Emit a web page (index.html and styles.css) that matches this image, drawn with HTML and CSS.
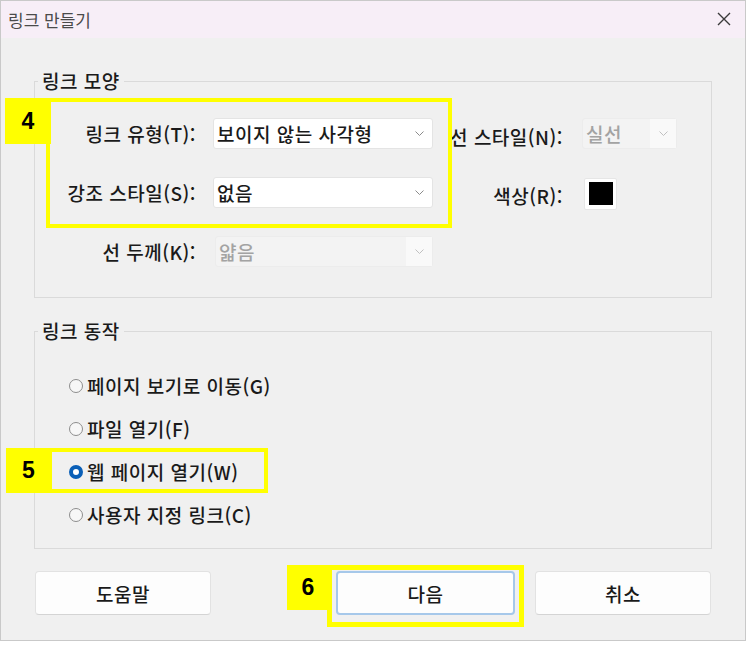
FILE: index.html
```html
<!DOCTYPE html>
<html lang="ko">
<head>
<meta charset="utf-8">
<title>링크 만들기</title>
<link rel="stylesheet" href="styles.css">
</head>
<body>
<div class="window">
  <div class="titlebar">
    <span class="title">링크 만들기</span>
    <svg class="close" width="14" height="14" viewBox="0 0 14 14"><path d="M1 1L13 13M13 1L1 13" stroke="#3a3a3a" stroke-width="1.4" fill="none"/></svg>
  </div>
  <div class="content">
    <fieldset class="group g1">
      <legend>링크 모양</legend>
      <div class="grid">
        <span class="lbl">링크 유형(T):</span>
        <div class="select"><span>보이지 않는 사각형</span><svg class="chev" width="9" height="5" viewBox="0 0 9 5"><path d="M0.5 0.5L4.5 4.5L8.5 0.5" stroke="#8a8a8a" fill="none"/></svg></div>
        <span class="lbl lbl-r">선 스타일(N):</span>
        <div class="select disabled narrow"><span>실선</span><span class="chev-box"><svg class="chev" width="9" height="5" viewBox="0 0 9 5"><path d="M0.5 0.5L4.5 4.5L8.5 0.5" stroke="#c0c0c0" fill="none"/></svg></span></div>

        <span class="lbl">강조 스타일(S):</span>
        <div class="select"><span>없음</span><svg class="chev" width="9" height="5" viewBox="0 0 9 5"><path d="M0.5 0.5L4.5 4.5L8.5 0.5" stroke="#8a8a8a" fill="none"/></svg></div>
        <span class="lbl lbl-r">색상(R):</span>
        <div class="swatch"><span class="swatch-fill"></span></div>

        <span class="lbl">선 두께(K):</span>
        <div class="select disabled thick"><span>얇음</span><span class="chev-box"><svg class="chev" width="9" height="5" viewBox="0 0 9 5"><path d="M0.5 0.5L4.5 4.5L8.5 0.5" stroke="#c0c0c0" fill="none"/></svg></span></div>
      </div>
    </fieldset>

    <fieldset class="group g2">
      <legend>링크 동작</legend>
      <div class="radios">
        <div class="radio"><span class="dot"></span><span>페이지 보기로 이동(G)</span></div>
        <div class="radio"><span class="dot"></span><span>파일 열기(F)</span></div>
        <div class="radio"><span class="dot on"></span><span>웹 페이지 열기(W)</span></div>
        <div class="radio"><span class="dot"></span><span>사용자 지정 링크(C)</span></div>
      </div>
    </fieldset>

    <div class="buttons">
      <button class="btn">도움말</button>
      <button class="btn primary">다음</button>
      <button class="btn">취소</button>
    </div>
  </div>

  <div class="mark-box box4"></div>
  <div class="badge badge4">4</div>
  <div class="mark-box box5"></div>
  <div class="badge badge5">5</div>
  <div class="mark-box box6"></div>
  <div class="badge badge6">6</div>
</div>
</body>
</html>
```

FILE: styles.css
```css
* { box-sizing: border-box; }
html, body { margin: 0; padding: 0; background: #ffffff; }
body {
  font-family: "Noto Sans CJK KR", "Noto Sans", sans-serif;
  font-size: 19px;
  font-weight: 500;
  letter-spacing: 0.5px;
  color: #1a1a1a;
}
.window {
  position: relative;
  width: 746px;
  height: 641px;
  border: 1px solid #c9c9c9;
  background: #f0f0f0;
}
.titlebar {
  height: 37px;
  background: #f7eef7;
  display: flex;
  align-items: center;
  justify-content: space-between;
  padding: 0 14px 0 7px;
}
.title { font-size: 17px; font-weight: 400; letter-spacing: 0; color: #4a4a4a; }
.close { display: block; margin-top: -2px; }
.content {
  padding: 31px 33px 0 33px;
}
.group {
  margin: 0;
  padding: 0;
  border: 1px solid #dadada;
  min-width: 0;
}
.group legend {
  margin-left: 3px;
  padding: 0 4px;
  line-height: 24px;
}
.grid {
  display: grid;
  grid-template-columns: 161px 220px 113px 114px;
  column-gap: 17px;
  grid-template-rows: 31px 31px 31px;
  row-gap: 28px;
  padding: 25px 0 30px 0;
  align-items: center;
}
.lbl { text-align: right; white-space: nowrap; }
.lbl-r { position: relative; top: 3px; }
.select {
  height: 31px;
  background: #ffffff;
  border: 1px solid #e4e4e4;
  border-radius: 3px;
  display: flex;
  align-items: center;
  justify-content: space-between;
  padding: 0 8px 0 3px;
  white-space: nowrap;
}
.chev { display: block; }
.select.disabled {
  background: #f3f3f3;
  border-color: #ececec;
  color: #a3a3a3;
  padding: 0 0 0 3px;
}
.select.narrow { width: 95px; margin-left: 2px; }
.select.thick { margin-left: 2px; }
.chev-box {
  height: 100%;
  width: 26px;
  background: #f9f9f9;
  display: flex;
  align-items: center;
  justify-content: center;
}
.swatch {
  width: 33px;
  height: 32px;
  margin-left: 4px;
  background: #ffffff;
  border: 1px solid #e6e6e6;
  border-radius: 2px;
  display: flex;
  align-items: center;
  justify-content: center;
  position: relative;
  top: 1px;
}
.swatch-fill { width: 24px; height: 23px; background: #000000; }

.g2 { margin-top: 21px; }
.radios { padding: 21px 0 12px 34px; }
.radio {
  height: 43px;
  display: flex;
  align-items: center;
  gap: 4px;
}
.dot {
  width: 14px;
  height: 14px;
  border-radius: 50%;
  border: 1px solid #8d8d8d;
  background: #f7f7f7;
  flex: none;
}
.dot.on {
  border: 4px solid #0a5fb7;
  background: #ffffff;
}

.buttons {
  display: flex;
  gap: 20px;
  margin-top: 22px;
  padding: 0 1px;
}
.btn {
  width: 176px;
  height: 44px;
  font-family: inherit;
  font-size: 19px;
  font-weight: 500;
  letter-spacing: 0.5px;
  color: #1a1a1a;
  background: #fdfdfd;
  border: 1px solid #e2e2e2;
  border-bottom-color: #d4d4d4;
  border-radius: 4px;
  padding: 0;
}
.btn.primary {
  width: 179px;
  margin-left: auto;
  border: 2px solid #a6c8ea;
}

.mark-box {
  position: absolute;
  border: 4px solid #ffff00;
}
.box4 { left: 45px; top: 97px; width: 406px; height: 130px; }
.box5 { left: 47px; top: 447px; width: 220px; height: 45px; }
.box6 { left: 326px; top: 564px; width: 197px; height: 62px; border-width: 5px; }
.badge {
  position: absolute;
  background: #ffff00;
  color: #000000;
  font-family: "Liberation Sans", "Noto Sans", sans-serif;
  font-weight: bold;
  font-size: 23px;
  letter-spacing: 0;
  display: flex;
  align-items: center;
  justify-content: center;
}
.badge4 { left: 4px; top: 97px; width: 46px; height: 46px; }
.badge5 { left: 5px; top: 447px; width: 45px; height: 45px; }
.badge6 { left: 286px; top: 564px; width: 42px; height: 45px; }
```
